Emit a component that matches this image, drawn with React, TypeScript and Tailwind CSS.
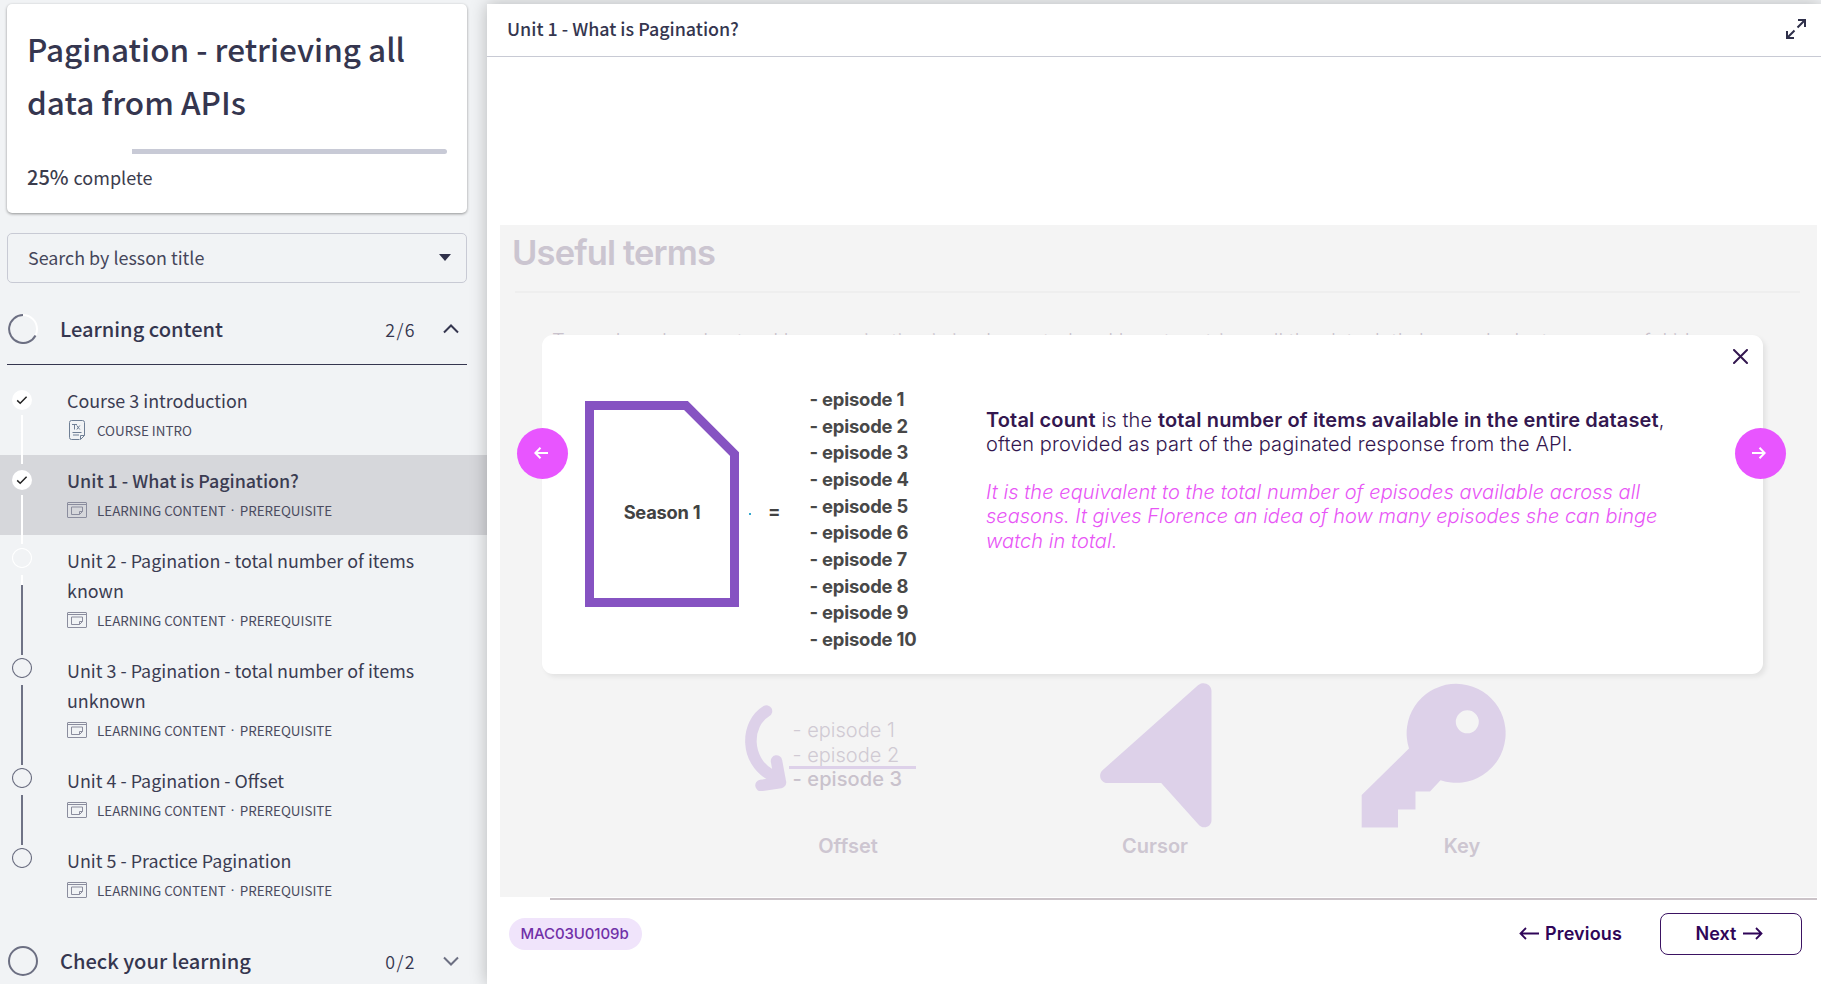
type Marker = "done" | "current" | "todo";

interface Lesson {
  title: string;
  kind: string;
  required: boolean;
  marker: Marker;
  active?: boolean;
  line: "white" | "grey" | "mixed" | "none";
}

const lessons: Lesson[] = [
  { title: "Course 3 introduction", kind: "COURSE INTRO", required: false, marker: "done", line: "white" },
  { title: "Unit 1 - What is Pagination?", kind: "LEARNING CONTENT", required: true, marker: "done", active: true, line: "white" },
  { title: "Unit 2 - Pagination - total number of items known", kind: "LEARNING CONTENT", required: true, marker: "current", line: "mixed" },
  { title: "Unit 3 - Pagination - total number of items unknown", kind: "LEARNING CONTENT", required: true, marker: "todo", line: "grey" },
  { title: "Unit 4 - Pagination - Offset", kind: "LEARNING CONTENT", required: true, marker: "todo", line: "grey" },
  { title: "Unit 5 - Practice Pagination", kind: "LEARNING CONTENT", required: true, marker: "todo", line: "none" },
];

const episodes = [1, 2, 3, 4, 5, 6, 7, 8, 9, 10];

function MarkerIcon({ marker }: { marker: Marker }) {
  if (marker === "done") {
    return (
      <svg className="mt-[15px] size-5 shrink-0" viewBox="0 0 20 20" fill="none">
        <circle cx="10" cy="10" r="10" fill="#fff" />
        <path d="M5.2 10.4l3 2.8 6.4-6.4" stroke="#222" strokeWidth="1.5" />
      </svg>
    );
  }
  return (
    <svg className="mt-[13px] size-5 shrink-0" viewBox="0 0 20 20" fill="none">
      <circle cx="10" cy="10" r="9.5" stroke={marker === "current" ? "#fff" : "#6c6f82"} strokeWidth="1.1" />
    </svg>
  );
}

function Connector({ line, done }: { line: Lesson["line"]; done: boolean }) {
  if (line === "none") return null;
  if (line === "mixed") {
    return (
      <div className="z-10 mt-[2px] mb-[-10px] flex w-[2px] flex-1 flex-col">
        <div className="h-[10px] bg-white" />
        <div className="flex-1 bg-[#6f7285]" />
      </div>
    );
  }
  return (
    <div
      className={
        "z-10 w-[2px] flex-1 " +
        (line === "white" ? "bg-white " : "bg-[#6f7285] ") +
        (done ? "mt-0 mb-[-9px]" : "mt-[2px] mb-[-10px]")
      }
    />
  );
}

function DocIcon() {
  return (
    <svg className="ml-[2px] mr-[12px] h-5 w-[16px]" viewBox="0 0 16 20" fill="none" stroke="#6f7f95" strokeWidth="1">
      <path d="M10.5 19.5h-8a2 2 0 0 1-2-2v-15a2 2 0 0 1 2-2h11a2 2 0 0 1 2 2v13l-4 4v-4h4" />
      <path d="M3 4.5h5M5.5 4.5v5M7.8 5.500l3 4M10.800 5.500l-3 4M3.500 12.500h9M4 15h6" />
    </svg>
  );
}

function WindowIcon() {
  return (
    <svg className="mr-[10px] h-4 w-5" viewBox="0 0 20 16" fill="none" stroke="#8b8d9e" strokeWidth="1">
      <rect x="0.5" y="0.5" width="19" height="15" rx="0.5" />
      <path d="M0.500 2.500h19M12.500 12.500H4.500v-7.500h11v4.500l-3 3v-3h3" />
    </svg>
  );
}

function LessonRow({ lesson }: { lesson: Lesson }) {
  return (
    <li className={"flex pl-[12px] " + (lesson.active ? "bg-[#d6d7db]" : "")}>
      <div className="flex w-5 flex-col items-center gap-[5px]">
        <MarkerIcon marker={lesson.marker} />
        <Connector line={lesson.line} done={lesson.marker === "done"} />
      </div>
      <div className="ml-[35px] w-[360px] py-[10px]">
        <p className={"text-[17.9px] leading-[30px] text-[#3b3c52] " + (lesson.active ? "font-medium" : "font-normal")}>{lesson.title}</p>
        <p className="flex h-[30px] items-center text-[13.4px] text-[#4a4b60]">
          {lesson.required ? <WindowIcon /> : <DocIcon />}
          <span>{lesson.kind}</span>
          {lesson.required && <span className="w-[14px] text-center font-['Noto_Sans',sans-serif]">·</span>}
          {lesson.required && <span>PREREQUISITE</span>}
        </p>
      </div>
    </li>
  );
}

function Sidebar() {
  return (
    <aside className="flex w-[487px] shrink-0 flex-col bg-[#f1f3f5] pt-1 font-['Noto_Sans_CJK_SC',sans-serif] text-[#35364f]">
      <section className="ml-[7px] h-[209px] w-[460px] shrink-0 rounded-[5px] bg-white px-[20px] pt-[18px] shadow-[0_1px_3px_rgba(0,0,0,0.4)]">
        <h1 className="text-[31.5px] leading-[53px] font-medium">
          Pagination - retrieving all
          <br />
          data from APIs
        </h1>
        <div className="mt-[21px] flex h-[5px] justify-end">
          <div className="h-[5px] w-[315px] rounded-r-[3px] bg-[#c8cad6]" />
        </div>
        <p className="mt-[8px] flex items-center gap-[5px] text-[18px] leading-[30px] text-[#3b3c4d]">
          <span className="text-[20px] font-medium">25%</span> complete
        </p>
      </section>

      <div className="mt-[20px] ml-[7px] flex h-[50px] w-[460px] shrink-0 items-center justify-between rounded-[5px] border border-[#c8cad4] pr-[15px] pb-[2px] pl-[20px] text-[17.9px] text-[#45465a]">
        <span>Search by lesson title</span>
        <svg className="h-[7px] w-[12px]" viewBox="0 0 12 7">
          <path d="M0 0h12L6 7z" fill="#2f304a" />
        </svg>
      </div>

      <div className="ml-[7px] flex h-[82px] w-[460px] shrink-0 items-center border-b border-[#35364f] pt-[11px]">
        <svg className="ml-px size-[30px]" viewBox="0 0 30 30" fill="none" strokeWidth="2">
          <circle cx="15" cy="15" r="14" stroke="#fff" />
          <path d="M27.500 21.500A14 14 0 1 1 15 1" stroke="#6c6f82" />
        </svg>
        <h2 className="ml-[22px] flex-1 text-[20.1px] font-medium">Learning content</h2>
        <span className="mr-[27px] text-[17.8px] font-[350] tracking-[1.400px]">2/6</span>
        <svg className="mr-[8px] h-[10px] w-[16px]" viewBox="0 0 16 10" fill="none">
          <path d="M1 8.500L8 1.500l7 7" stroke="#35364f" strokeWidth="2" />
        </svg>
      </div>

      <ul className="mt-[10px] shrink-0">
        {lessons.map((l) => (
          <LessonRow key={l.title} lesson={l} />
        ))}
      </ul>

      <div className="ml-[7px] flex h-[92px] w-[460px] shrink-0 items-center">
        <svg className="ml-px size-[30px]" viewBox="0 0 30 30" fill="none" strokeWidth="2">
          <circle cx="15" cy="15" r="14" stroke="#6c6f82" />
        </svg>
        <h2 className="ml-[22px] flex-1 text-[20.1px] font-medium">Check your learning</h2>
        <span className="mr-[27px] text-[17.8px] font-[350] tracking-[1.400px]">0/2</span>
        <svg className="mr-[8px] h-[10px] w-[16px]" viewBox="0 0 16 10" fill="none">
          <path d="M1 1.500l7 7 7-7" stroke="#6c6f82" strokeWidth="2" />
        </svg>
      </div>
    </aside>
  );
}

function ArrowButton({ side }: { side: "left" | "right" }) {
  return (
    <button className={"absolute top-[93px] flex size-[51px] items-center justify-center rounded-full bg-[#e855ff] " + (side === "left" ? "left-[-25px]" : "right-[-23px]")}>
      <svg className={"mr-[3px] mb-[2px] h-[12px] w-[14px] " + (side === "left" ? "" : "rotate-180")} viewBox="0 0 14 12" fill="none" stroke="#fff" strokeWidth="2">
        <path d="M6.500 0.800L1.300 6l5.200 5.200M1.500 6h12.500" />
      </svg>
    </button>
  );
}

function Modal() {
  return (
    <div className="absolute top-[110px] left-[42px] flex h-[339px] w-[1221px] rounded-[11px] bg-white shadow-[3px_3px_5px_rgba(0,0,0,0.07)]">
      <div className="flex w-[444px] pl-[43px]">
        <div className="mt-[66px] grid h-[206px] w-[154px]">
          <svg className="col-start-1 row-start-1 h-[206px] w-[154px]" viewBox="0 0 154 206" fill="none">
            <path d="M4.500 4.500h96.500L149.500 53v148.500H4.500z" stroke="#8653c2" strokeWidth="9" />
          </svg>
          <span className="col-start-1 row-start-1 mt-[3px] self-center justify-self-center pt-[14px] text-[18.300px] font-bold tracking-[-0.25px] text-[#424242]">
            Season 1
          </span>
        </div>
        <span className="mt-[178px] ml-[10px] size-[2px] bg-[#35a8cf]" />
        <span className="mt-[162px] ml-[17px] text-[18.4px] leading-[28px] font-bold text-[#424242]">=</span>
        <ul className="mt-[51px] ml-[29px] text-[18.4px] leading-[26.65px] font-bold tracking-[-0.2px] whitespace-nowrap text-[#484848]">
          {episodes.map((n) => (
            <li key={n}>- episode {n}</li>
          ))}
        </ul>
      </div>
      <div className="pt-[72.500px] text-[20px] leading-[24.600px] font-light tracking-[0.12px] whitespace-nowrap text-[#33174f]">
        <p className="tracking-[0.14px]">
          <b className="font-semibold">Total count</b> is the <b className="font-semibold">total number of items available in the entire dataset</b>,
        </p>
        <p>often provided as part of the paginated response from the API.</p>
        <p className="mt-[23px] tracking-[0.07px] text-[#e855f6] italic">
          It is the equivalent to the total number of episodes available across all
          <br />
          <span className="tracking-[0px]">seasons. It gives Florence an idea of how many episodes she can binge</span>
          <br />
          watch in total.
        </p>
      </div>
      <svg className="absolute top-[14px] right-[15px] size-[15px]" viewBox="0 0 15 15" stroke="#33174f" strokeWidth="2" strokeLinecap="round">
        <path d="M1 1l13 13M14 1L1 14" />
      </svg>
      <ArrowButton side="left" />
      <ArrowButton side="right" />
    </div>
  );
}

function TermCards() {
  const label = "mt-[6px] text-center text-[20px] leading-[24px] font-semibold text-[#cdc6d1]";
  return (
    <div className="ml-[194.500px] grid w-[921px] grid-cols-3">
      <div>
        <div className="flex h-[145px] pt-[22px] pl-[49px]">
          <svg className="h-[86px] w-[43px]" viewBox="0 0 43 86" fill="none" stroke="#ddd1e9" strokeWidth="11.500" strokeLinecap="round" strokeLinejoin="round">
            <path d="M22.500 6C1 19 1 56 27 70M32.500 56l4 21.500L17 80.500M34 64l-2 12" />
          </svg>
          <ul className="mt-[13px] ml-px h-fit pl-[5px] text-[20px] leading-[24.500px] font-light whitespace-nowrap text-[#d0cad3]">
            <li>- episode 1</li>
            <li className="relative">
              - episode 2
              <span className="absolute bottom-[-2px] left-[-4px] h-[3px] w-[127px] bg-[#ddd1e9]" />
            </li>
            <li className="font-[450] tracking-[0.1px] text-[#c9c2cc]">- episode 3</li>
          </ul>
        </div>
        <p className={label}>Offset</p>
      </div>
      <div>
        <svg className="ml-[98.500px] h-[145px] w-[112px]" viewBox="1100.500 683 112 145" fill="#ddd1e9">
          <path d="M1198.500 685.200C1203 681 1212 683.500 1212 691V820C1212 827.500 1203 830 1198.500 824L1161.700 783H1108C1101 783 1098 774.500 1103.300 770z" />
        </svg>
        <p className={label}>Cursor</p>
      </div>
      <div>
        <svg className="ml-[52px] h-[145px] w-[145px]" viewBox="1361 683 145 145" fill="#ddd1e9" fillRule="evenodd">
          <path d="M1361.700 795L1409 748.500A49.500 49.500 0 1 1 1440.500 780.300L1430 791.500H1415.500V809.500H1398V827.500H1361.700zM1478.800 721.800a11.500 11.500 0 1 0-23 0a11.500 11.500 0 1 0 23 0z" />
        </svg>
        <p className={label}>Key</p>
      </div>
    </div>
  );
}

export default function App() {
  return (
    <div className="flex h-[984px] w-[1821px] overflow-hidden bg-[#f1f3f5]">
      <Sidebar />
      <main className="relative z-20 mt-1 flex h-[980px] flex-1 flex-col bg-white font-['Inter',sans-serif] shadow-[0_0_16px_rgba(0,0,0,0.25)]">
        <header className="flex h-[53px] items-center justify-between border-b border-[#c8cad4] pr-[15px] pb-[2px] pl-[20px] font-['Noto_Sans_CJK_SC',sans-serif] text-[#35364f]">
          <span className="pb-[2px] text-[17.9px] font-medium">Unit 1 - What is Pagination?</span>
          <svg className="size-[20px]" viewBox="0 0 20 20" fill="none" stroke="#2f304a" strokeWidth="2">
            <path d="M11.500 8.500L19 1M12 1h7v7M8.500 11.500L1 19M8 19H1v-7" />
          </svg>
        </header>

        <section className="relative mt-[168px] ml-[13px] flex h-[672px] w-[1317px] flex-col bg-[#f4f4f4]">
          <h2 className="mt-[8px] ml-[12px] text-[34.500px] leading-[40px] font-semibold tracking-[-0.85px] text-[#cbc5d0]">Useful terms</h2>
          <div className="mt-[18px] ml-[15px] h-[2px] w-[1285px] bg-[#eeeeee]" />
          <p className="mt-[36px] ml-[52px] text-[20px] leading-[24px] font-light whitespace-nowrap text-[#c9c2cc]">
            To work and understand how pagination is implemented and how to retrieve all the data, let&apos;s have a look at some useful ideas
          </p>
          <div className="mt-[330px]">
            <TermCards />
          </div>
          <Modal />
        </section>

        <div className="mt-px ml-[63px] h-[1.500px] w-[1267px] bg-[#cbc3c8]" />

        <footer className="mt-[13px] flex h-[42px] items-center pr-[19px] pl-[22px] text-[18px] font-semibold text-[#2f0558]">
          <span className="flex h-[32px] w-[133px] items-center justify-center rounded-full bg-[#f0e4fb] pt-px pr-[2px] text-[15px] font-medium tracking-[-0.1px] text-[#7030a8]">
            MAC03U0109b
          </span>
          <button className="ml-auto flex items-center gap-[6px] tracking-[0.15px]">
            <svg className="h-[13px] w-[20px]" viewBox="0 0 20 13" fill="none" stroke="#2f0558" strokeWidth="1.800">
              <path d="M7 1L1.500 6.500L7 12M1.500 6.500H20" />
            </svg>
            Previous
          </button>
          <button className="ml-[38px] flex h-[42px] w-[142px] items-center justify-center gap-[7px] rounded-[8px] border border-[#3b1362] pr-[3px]">
            Next
            <svg className="h-[13px] w-[20px]" viewBox="0 0 20 13" fill="none" stroke="#2f0558" strokeWidth="1.800">
              <path d="M13 1l5.500 5.500L13 12M18.500 6.500H0" />
            </svg>
          </button>
        </footer>
      </main>
    </div>
  );
}
